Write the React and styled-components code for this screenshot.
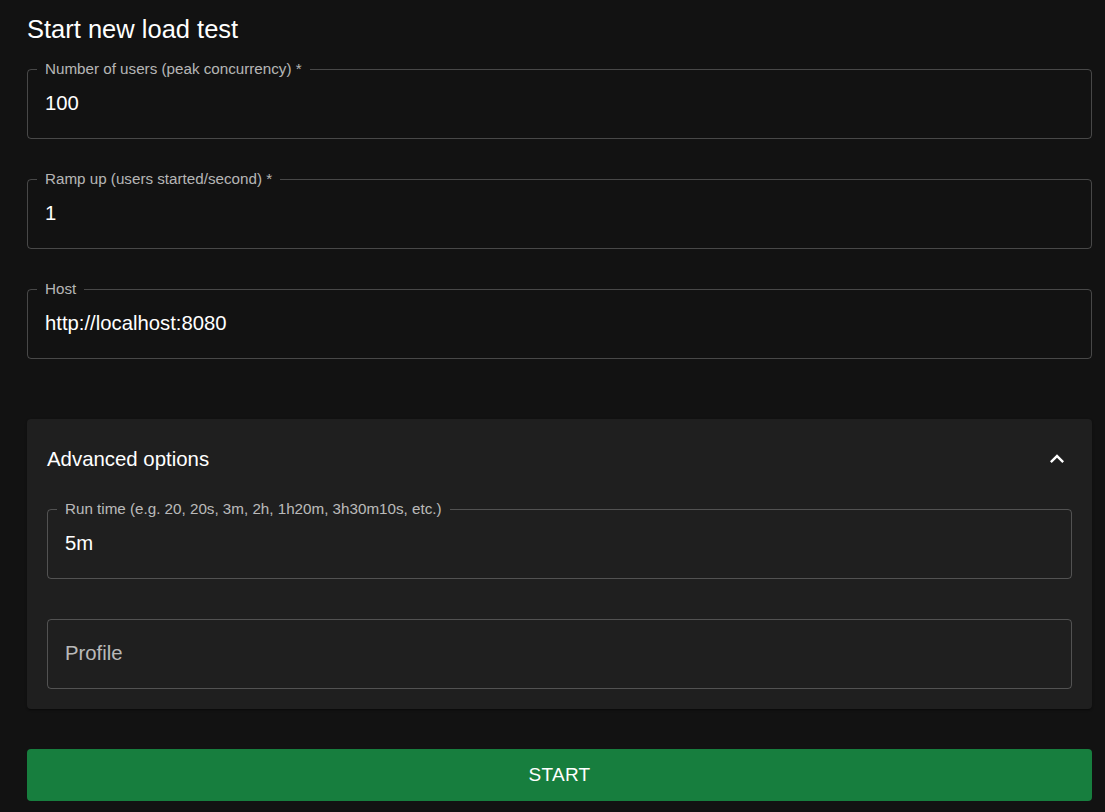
import React from "react";
import styled, { createGlobalStyle } from "styled-components";

const fields = [
  { label: "Number of users (peak concurrency) *", value: "100" },
  { label: "Ramp up (users started/second) *", value: "1" },
  { label: "Host", value: "http://localhost:8080" },
];

const advanced = [
  { label: "Run time (e.g. 20, 20s, 3m, 2h, 1h20m, 3h30m10s, etc.)", value: "5m" },
  { label: "", value: "", placeholder: "Profile" },
];

const ChevronUp = () => (
  <svg width="28" height="28" viewBox="0 0 24 24" fill="currentColor">
    <path d="M12 8l-6 6 1.41 1.41L12 10.83l4.59 4.58L18 14z" />
  </svg>
);

const Field = ({ label, value, placeholder }) => (
  <FieldBox>
    <Legend $empty={!label}>{label}</Legend>
    <Input defaultValue={value} placeholder={placeholder} />
  </FieldBox>
);

const App = () => {
  return (
    <>
      <GlobalStyle />
      <Page>
        <Title>Start new load test</Title>
        <FieldList>
          {fields.map((f, idx) => (
            <Field key={idx} {...f} />
          ))}
        </FieldList>
        <Paper>
          <PaperHead>
            <PaperTitle>Advanced options</PaperTitle>
            <IconWrap>
              <ChevronUp />
            </IconWrap>
          </PaperHead>
          <PaperBody>
            {advanced.map((f, idx) => (
              <Field key={idx} {...f} />
            ))}
          </PaperBody>
        </Paper>
        <StartButton>START</StartButton>
      </Page>
    </>
  );
};

const GlobalStyle = createGlobalStyle`
  html, body {
    margin: 0;
    padding: 0;
    background: #121212;
    font-family: "Liberation Sans", Arial, sans-serif;
    color: #fff;
  }
  * {
    box-sizing: border-box;
  }
`;

const Page = styled.div`
  padding: 13px 13px 11px 27px;
  display: flex;
  flex-direction: column;
`;

const Title = styled.h1`
  margin: 0 0 16px 0;
  font-size: 25.5px;
  font-weight: 400;
  line-height: 32px;
  color: #fff;
`;

const FieldList = styled.div`
  display: flex;
  flex-direction: column;
  gap: 32px;
`;

const FieldBox = styled.fieldset`
  margin: 0;
  padding: 0 17px 23px 17px;
  border: 1px solid rgba(255, 255, 255, 0.23);
  border-radius: 4px;
  min-width: 0;
`;

const Legend = styled.legend`
  margin-left: -8px;
  height: 16px;
  padding: ${(p) => (p.$empty ? "0" : "0 8px")};
  max-width: ${(p) => (p.$empty ? "0.01px" : "none")};
  overflow: hidden;
  font-size: 15.2px;
  line-height: 16px;
  color: rgba(255, 255, 255, 0.7);
  white-space: nowrap;
`;

const Input = styled.input`
  display: block;
  width: 100%;
  margin-top: 15px;
  padding: 0;
  height: 23px;
  border: none;
  outline: none;
  background: transparent;
  font-family: "Liberation Sans", Arial, sans-serif;
  font-size: 20.3px;
  color: #fff;

  &::placeholder {
    color: rgba(255, 255, 255, 0.7);
    opacity: 1;
  }
`;

const Paper = styled.div`
  margin-top: 60px;
  background: #1f1f1f;
  border-radius: 4px;
  box-shadow: 0 2px 1px -1px rgba(0, 0, 0, 0.2), 0 1px 1px 0 rgba(0, 0, 0, 0.14),
    0 1px 3px 0 rgba(0, 0, 0, 0.12);
`;

const PaperHead = styled.div`
  height: 80px;
  padding: 0 20px;
  display: flex;
  align-items: center;
  justify-content: space-between;
`;

const PaperTitle = styled.span`
  font-size: 20.4px;
  line-height: 24px;
  color: #fff;
`;

const IconWrap = styled.span`
  display: flex;
  margin-right: 1px;
  color: #fff;
`;

const PaperBody = styled.div`
  padding: 2px 20px 20px 20px;
  display: flex;
  flex-direction: column;
  gap: 32px;
`;

const StartButton = styled.button`
  margin-top: 40px;
  height: 52px;
  width: 100%;
  border: none;
  border-radius: 4px;
  background: #177e3e;
  color: #fff;
  font-family: "Liberation Sans", Arial, sans-serif;
  font-size: 19px;
  font-weight: 400;
  letter-spacing: 0.3px;
  cursor: pointer;
`;

export default App;
